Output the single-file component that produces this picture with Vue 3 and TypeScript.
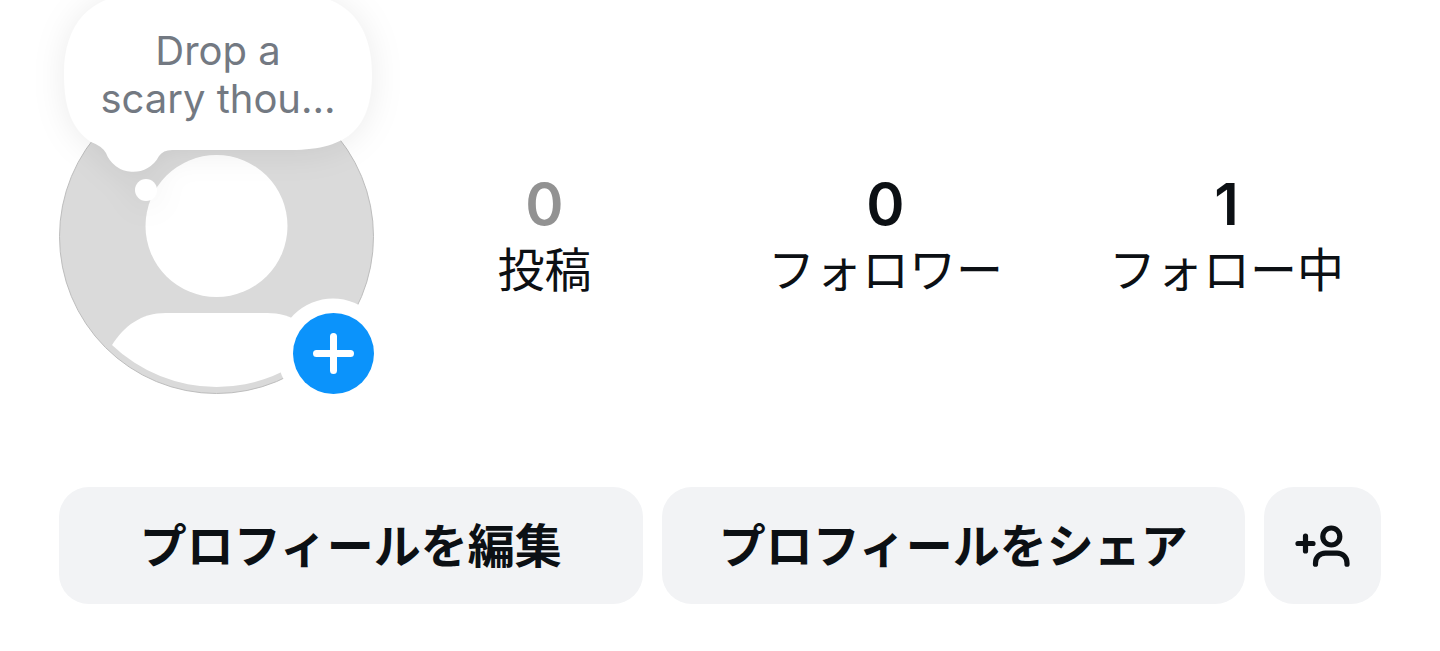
<script setup lang="ts">
interface Stat {
  value: number
  label: string
  muted?: boolean
}

const stats: Stat[] = [
  { value: 0, label: '投稿', muted: true },
  { value: 0, label: 'フォロワー' },
  { value: 1, label: 'フォロー中' },
]

const actions: string[] = ['プロフィールを編集', 'プロフィールをシェア']
</script>

<template>
  <main class="profile">
    <header class="summary">
      <div class="avatar">
        <svg class="portrait" viewBox="0 0 315 315" aria-hidden="true">
          <circle cx="157.5" cy="157.5" r="157" fill="#dadada" stroke="#bdbdbd" />
          <circle cx="157.5" cy="147" r="71" fill="#fff" />
          <path d="M53 266C65 247 82 234 107 234H208C233 234 250 247 262 266A151 151 0 0 1 53 266Z" fill="#fff" />
          <circle cx="274" cy="275" r="55.5" fill="#fff" />
        </svg>
        <button class="note" type="button">
          <svg class="cloud" viewBox="0 0 308 210" aria-hidden="true">
            <path
              d="M0 74C0 24 26 -6 76 -6H232C282 -6 308 24 308 74C308 126 286 150 227 150H108Q99 150 95 156A29 29 0 0 1 42 153Q38 146 27 142C8 129 0 108 0 74Z"
              fill="#fff"
            />
            <circle cx="82" cy="190" r="11" fill="#fff" />
          </svg>
          <span class="note-text">Drop a<br />scary thou…</span>
        </button>
        <button class="add" type="button" aria-label="追加">
          <svg viewBox="0 0 81 81" aria-hidden="true">
            <circle cx="40.5" cy="40.5" r="40.5" fill="#0b93fb" />
            <path d="M40.5 23.5V57.5M23.5 40.5H57.5" stroke="#fff" stroke-width="7" stroke-linecap="round" />
          </svg>
        </button>
      </div>
      <ul class="stats">
        <li v-for="stat in stats" :key="stat.label">
          <a href="#" class="stat">
            <span class="value" :class="{ muted: stat.muted }">{{ stat.value }}</span>
            <span class="label">{{ stat.label }}</span>
          </a>
        </li>
      </ul>
    </header>
    <div class="actions">
      <button v-for="action in actions" :key="action" class="action" type="button">{{ action }}</button>
      <button class="discover" type="button" aria-label="友達を探す">
        <svg viewBox="0 0 117 117" fill="none" stroke="#0c1014" stroke-width="5.2" stroke-linecap="round" aria-hidden="true">
          <path d="M41.5 49V64M34 56.5H49" />
          <circle cx="67.3" cy="49.5" r="8.5" />
          <path d="M51.5 77.200V76C51.5 70.300 55.800 66.200 61.500 66.200H73C78.700 66.200 83 70.300 83 76V77.200" />
        </svg>
      </button>
    </div>
  </main>
</template>

<style>
body {
  margin: 0;
  background: #fff;
}
</style>

<style scoped>
.profile {
  display: flex;
  flex-direction: column;
  gap: 93px;
  padding: 79px 0 47px;
  color: #0c1014;
  font-family: Inter, "Noto Sans CJK JP", sans-serif;
}

button {
  padding: 0;
  border: 0;
  background: none;
  color: inherit;
  font: inherit;
  cursor: pointer;
}

svg {
  display: block;
}

.summary {
  display: flex;
  align-items: center;
  padding: 0 43px 0 59px;
}

.avatar {
  position: relative;
  flex: none;
  width: 315px;
}

.portrait {
  width: 100%;
}

.note {
  position: absolute;
  left: 5px;
  bottom: 184px;
  width: 308px;
}

.cloud {
  width: 100%;
  overflow: visible;
  filter: drop-shadow(0 2px 16px rgba(0, 0, 0, 0.08));
}

.note-text {
  position: absolute;
  inset: 27px 0 auto;
  color: #737982;
  font-size: 40px;
  line-height: 48px;
  text-align: center;
}

.add {
  position: absolute;
  right: 0;
  bottom: 0;
  width: 81px;
}

.stats {
  display: grid;
  flex: 1;
  grid-template-columns: repeat(3, 1fr);
  margin: 0;
  padding: 0;
  list-style: none;
}

.stat {
  display: flex;
  flex-direction: column;
  align-items: center;
  color: inherit;
  text-decoration: none;
}

.value {
  font-size: 58px;
  font-weight: 600;
  line-height: 66px;
}

.muted {
  color: #929292;
}

.label {
  font-size: 47px;
  font-weight: 400;
  line-height: 66px;
  white-space: nowrap;
}

.actions {
  display: flex;
  gap: 19px;
  padding: 0 59px;
}

.action,
.discover {
  border-radius: 30px;
  background: #f2f3f5;
}

.action {
  flex: 1;
  font-size: 47px;
  font-weight: 700;
  line-height: 117px;
  white-space: nowrap;
}

.discover {
  flex: none;
  width: 117px;
}
</style>
